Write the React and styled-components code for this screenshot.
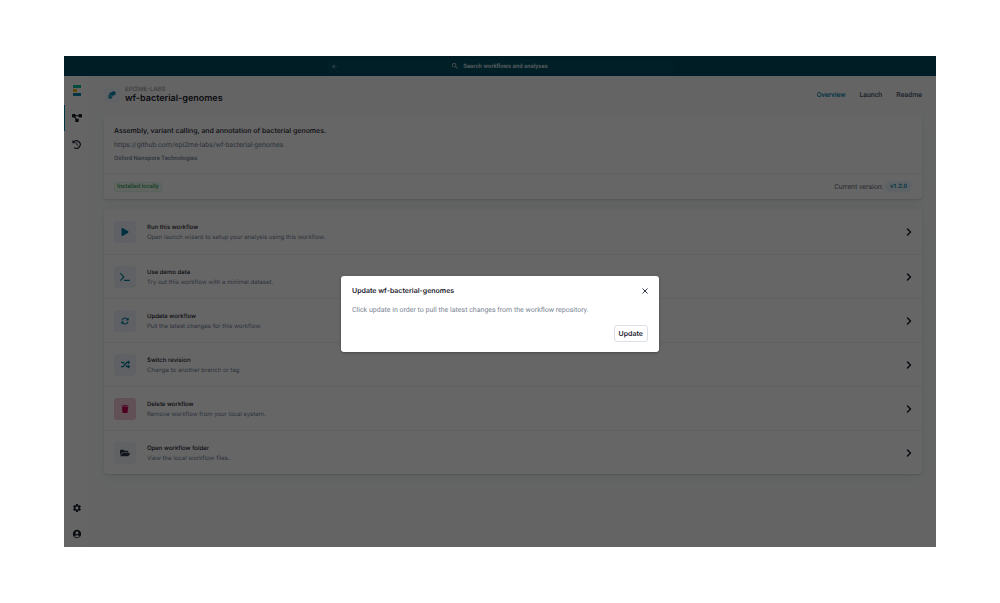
import React from 'react';
import styled, {createGlobalStyle} from 'styled-components';
import {FaBacterium, FaFolderOpen, FaPlay, FaRandom, FaTrash} from 'react-icons/fa';
import {FaArrowsRotate, FaTerminal} from 'react-icons/fa6';
import {ChevronRight} from 'lucide-react';
import {MdAccountCircle, MdArrowBack, MdSearch, MdSettings} from 'react-icons/md';


const actions = [
  {title: 'Run this workflow', text: 'Open launch wizard to setup your analysis using this workflow.', icon: <FaPlay size={8}/>},
  {title: 'Use demo data', text: 'Try out this workflow with a minimal dataset.', icon: <FaTerminal size={10}/>},
  {title: 'Update workflow', text: 'Pull the latest changes for this workflow.', icon: <FaArrowsRotate size={8}/>},
  {title: 'Switch revision', text: 'Change to another branch or tag', icon: <FaRandom size={9}/>},
  {title: 'Delete workflow', text: 'Remove workflow from your local system.', icon: <FaTrash size={8}/>, tone: 'danger'},
  {title: 'Open workflow folder', text: 'View the local workflow files.', icon: <FaFolderOpen size={10}/>, tone: 'neutral'},
]

const tones = {
  primary: {color: '#007ba0', background: '#eef2fa'},
  danger: {color: '#c40052', background: '#f3c8d8'},
  neutral: {color: '#2d3748', background: '#f3f6f8'},
}

function Logo() {
  return (
    <svg width="8" height="11" viewBox="0 0 8 11" role="img" aria-label="EPI2ME">
      <rect width="8" height="3" fill="#0fb9a0"/>
      <rect y="4" width="4" height="3" fill="#f5b800"/>
      <rect y="8" width="8" height="3" fill="#0084a9"/>
    </svg>
  )
}

function WorkflowIcon() {
  return (
    <svg width="10" height="8" viewBox="0 0 20 16" fill="currentColor" aria-hidden="true">
      <path d="M5 3.5h10M4.5 4.5l5.5 8" stroke="currentColor" strokeWidth="2.4" fill="none"/>
      <rect width="7" height="7" rx="1.5"/>
      <rect x="13" width="7" height="7" rx="1.5"/>
      <rect x="6.5" y="9.5" width="7" height="6.5" rx="1.5"/>
    </svg>
  )
}

function HistoryIcon() {
  return (
    <svg width="9" height="9" viewBox="0 0 18 18" fill="none" stroke="currentColor" strokeWidth="2.2" strokeLinecap="round" aria-hidden="true">
      <path d="M3 4.5A7.5 7.5 0 1 1 5 15.5"/>
      <path d="M1.5 1.5v4.5h4.5z" fill="currentColor" strokeWidth="1"/>
      <path d="M9.5 5.5v4l2.5 1.5" strokeWidth="1.6"/>
    </svg>
  )
}

function CloseIcon() {
  return (
    <svg width="6" height="6" viewBox="0 0 12 12" stroke="currentColor" strokeWidth="2" aria-hidden="true">
      <path d="M1 1l10 10M11 1L1 11"/>
    </svg>
  )
}

function SideBar() {
  return (
    <SideNav aria-label="Main">
      <LogoLink href="#home"><Logo/></LogoLink>
      <SideLink href="#workflows" aria-label="Workflows" $active><WorkflowIcon/></SideLink>
      <SideLink href="#history" aria-label="History"><HistoryIcon/></SideLink>
      <Spacer/>
      <SideLink href="#settings" aria-label="Settings"><MdSettings size={10}/></SideLink>
      <SideLink href="#account" aria-label="Account"><MdAccountCircle size={10}/></SideLink>
    </SideNav>
  )
}

function ActionRow({title, text, icon, tone = 'primary'}) {
  return (
    <Row>
      <RowIcon $tone={tone}>{icon}</RowIcon>
      <RowText>
        <RowTitle>{title}</RowTitle>
        <RowDetail>{text}</RowDetail>
      </RowText>
      <ChevronRight size={12} strokeWidth={3}/>
    </Row>
  )
}

function UpdateDialog() {
  return (
    <Overlay>
      <Dialog role="dialog" aria-modal="true" aria-labelledby="dialog-title">
        <DialogHeader>
          <DialogTitle id="dialog-title">Update wf-bacterial-genomes</DialogTitle>
          <CloseButton type="button" aria-label="Close"><CloseIcon/></CloseButton>
        </DialogHeader>
        <DialogText>Click update in order to pull the latest changes from the workflow repository.</DialogText>
        <UpdateButton type="button">Update</UpdateButton>
      </Dialog>
    </Overlay>
  )
}

export default function App() {
  return (
    <Page>
      <GlobalStyle/>
      <Window>
        <TopBar>
          <SearchArea>
            <BackButton type="button" aria-label="Back"><MdArrowBack size={7}/></BackButton>
            <SearchButton type="button"><MdSearch size={8}/>Search workflows and analyses</SearchButton>
          </SearchArea>
        </TopBar>
        <Body>
          <SideBar/>
          <Main>
            <Header>
              <HeaderIcon><FaBacterium size={8}/></HeaderIcon>
              <HeaderText>
                <Owner>EPI2ME-LABS</Owner>
                <Title>wf-bacterial-genomes</Title>
              </HeaderText>
              <Tabs aria-label="Workflow">
                <Tab href="#overview" $active>Overview</Tab>
                <Tab href="#launch">Launch</Tab>
                <Tab href="#readme">Readme</Tab>
              </Tabs>
            </Header>
            <Card>
              <Summary>
                <SummaryTitle>Assembly, variant calling, and annotation of bacterial genomes.</SummaryTitle>
                <RepoLink href="#repository">https://github.com/epi2me-labs/wf-bacterial-genomes</RepoLink>
                <Author>Oxford Nanopore Technologies</Author>
              </Summary>
              <SummaryFooter>
                <Installed>Installed locally</Installed>
                <Version>Current version: <VersionTag>v1.2.0</VersionTag></Version>
              </SummaryFooter>
            </Card>
            <Card>
              {actions.map(action => <ActionRow key={action.title} {...action}/>)}
            </Card>
          </Main>
        </Body>
        <UpdateDialog/>
      </Window>
    </Page>
  )
}

const smallFont = 'Roboto, Inter, "Liberation Sans", sans-serif'

const GlobalStyle = createGlobalStyle`
  * {
    box-sizing: border-box;
  }
  body {
    margin: 0;
    background: #fff;
    font-family: Inter, "Liberation Sans", sans-serif;
    text-rendering: geometricPrecision;
  }
  h1, h2, h3, p {
    margin: 0;
  }
  a {
    color: inherit;
    text-decoration: none;
  }
  button {
    padding: 0;
    border: 0;
    background: none;
    color: inherit;
    font: inherit;
    text-rendering: inherit;
    cursor: pointer;
  }
  svg {
    display: block;
    flex: none;
  }
`

const Page = styled.div`
  display: flex;
  min-height: 100vh;
  padding: 56px 64px;
`

const Window = styled.div`
  position: relative;
  display: flex;
  flex: 1;
  flex-direction: column;
  min-width: 0;
  background: #f9fbfb;
  color: #1a202c;
`

const TopBar = styled.header`
  display: flex;
  justify-content: center;
  padding: 3px;
  background: #00485a;
`

const SearchArea = styled.div`
  display: flex;
  align-items: center;
  width: 40%;
  height: 14px;
  padding: 0 4px;
  border-radius: 3px;
  background: #004e60;
  color: #d4e0e4;
`

const BackButton = styled.button`
  color: #a4bfc6;
`

const SearchButton = styled.button`
  display: flex;
  flex: 1;
  align-items: center;
  justify-content: center;
  gap: 4px;
  padding-right: 8px;
  font-family: ${smallFont};
  font-size: 6px;
  font-weight: 600;
`

const Body = styled.div`
  display: flex;
  flex: 1;
`

const SideNav = styled.nav`
  display: flex;
  flex-direction: column;
  width: 26px;
  border-right: 1px solid #f1f3f3;
  background: #fcfcfc;
`

const LogoLink = styled.a`
  display: flex;
  justify-content: center;
  padding: 9px 0;
`

const SideLink = styled.a`
  display: flex;
  align-items: center;
  justify-content: center;
  height: 26px;
  box-shadow: ${props => props.$active ? 'inset 1px 0 #0084a9' : 'none'};
`

const Spacer = styled.div`
  flex: 1;
`

const Main = styled.main`
  display: flex;
  flex: 1;
  flex-direction: column;
  gap: 11px;
  min-width: 0;
  padding: 9px 14px;
`

const Header = styled.div`
  display: flex;
  align-items: center;
  gap: 5px;
`

const HeaderIcon = styled.div`
  display: grid;
  place-items: center;
  width: 16px;
  height: 16px;
  border-radius: 3px;
  background: #f0f4fd;
  color: #0084a9;
`

const HeaderText = styled.div`
  padding-top: 1px;
`

const Owner = styled.p`
  color: #a0a5ab;
  font-size: 6px;
  font-weight: 600;
  line-height: 7px;
`

const Title = styled.h1`
  font-size: 9px;
  font-weight: 600;
  line-height: 11px;
`

const Tabs = styled.nav`
  display: flex;
  gap: 14px;
  margin-left: auto;
`

const Tab = styled.a`
  color: ${props => props.$active ? '#0084a9' : '#4a5568'};
  font-family: ${smallFont};
  font-size: 7px;
  font-weight: 500;
  line-height: 10px;
`

const Card = styled.section`
  border-radius: 3px;
  background: #fff;
  box-shadow: 0 1px 2px rgba(0, 0, 0, 0.12), 0 4px 14px rgba(0, 0, 0, 0.05);
`

const Summary = styled.div`
  display: flex;
  flex-direction: column;
  gap: 5px;
  padding: 11px 10px 10px;
`

const SummaryTitle = styled.h2`
  font-size: 7px;
  font-weight: 500;
  line-height: 10px;
`

const RepoLink = styled.a`
  color: #718096;
  font-family: ${smallFont};
  font-size: 7px;
  line-height: 9px;
`

const Author = styled.p`
  color: #718096;
  font-family: ${smallFont};
  font-size: 6px;
  font-weight: 500;
  line-height: 8px;
`

const SummaryFooter = styled.div`
  display: flex;
  align-items: center;
  justify-content: space-between;
  height: 26px;
  padding: 0 10px;
  border-top: 1px solid #edf0f2;
`

const Installed = styled.span`
  padding: 0 2px;
  border: 1px solid #dcf5e4;
  border-radius: 3px;
  background: #f3fcf6;
  color: #38a15c;
  font-family: ${smallFont};
  font-size: 6px;
  font-weight: 500;
  line-height: 8px;
`

const Version = styled.p`
  display: flex;
  align-items: center;
  gap: 2px;
  color: #5f6b7c;
  font-family: ${smallFont};
  font-size: 7px;
`

const VersionTag = styled.span`
  padding: 0 5px;
  border-radius: 6px;
  background: #ebf5fc;
  color: #0084a9;
  font-size: 6px;
  font-weight: 600;
  line-height: 11px;
`

const Row = styled.button`
  display: flex;
  align-items: center;
  gap: 11px;
  width: 100%;
  height: 44px;
  padding: 0 7px 0 10px;
  text-align: left;

  & + & {
    border-top: 1px solid #edf0f2;
  }
`

const RowIcon = styled.span`
  display: grid;
  place-items: center;
  width: 22px;
  height: 22px;
  border-radius: 3px;
  color: ${props => tones[props.$tone].color};
  background: ${props => tones[props.$tone].background};
`

const RowText = styled.span`
  display: flex;
  flex: 1;
  flex-direction: column;
  padding-top: 2px;
  font-size: 6px;
  line-height: 10px;
`

const RowTitle = styled.span`
  font-weight: 500;
`

const RowDetail = styled.span`
  color: #718096;
`

const Overlay = styled.div`
  position: absolute;
  inset: 0;
  display: grid;
  place-items: center;
  padding: 39px 14px 14px;
  background: rgba(0, 0, 0, 0.6);
`

const Dialog = styled.div`
  display: flex;
  flex-direction: column;
  gap: 10px;
  width: 100%;
  max-width: 318px;
  padding: 10px 11px;
  border-radius: 3px;
  background: #fff;
  box-shadow: 0 1px 3px rgba(0, 0, 0, 0.3);
`

const DialogHeader = styled.div`
  display: flex;
  align-items: center;
  justify-content: space-between;
`

const DialogTitle = styled.h2`
  font-size: 7px;
  font-weight: 600;
  line-height: 9px;
`

const CloseButton = styled.button`
  color: #2d3748;
`

const DialogText = styled.p`
  color: #7c8594;
  font-family: ${smallFont};
  font-size: 7px;
  line-height: 10px;
`

const UpdateButton = styled.button`
  align-self: flex-end;
  height: 17px;
  padding: 0 4px;
  border: 1px solid #dbe0e6;
  border-radius: 3px;
  font-size: 7px;
  font-weight: 600;
`
